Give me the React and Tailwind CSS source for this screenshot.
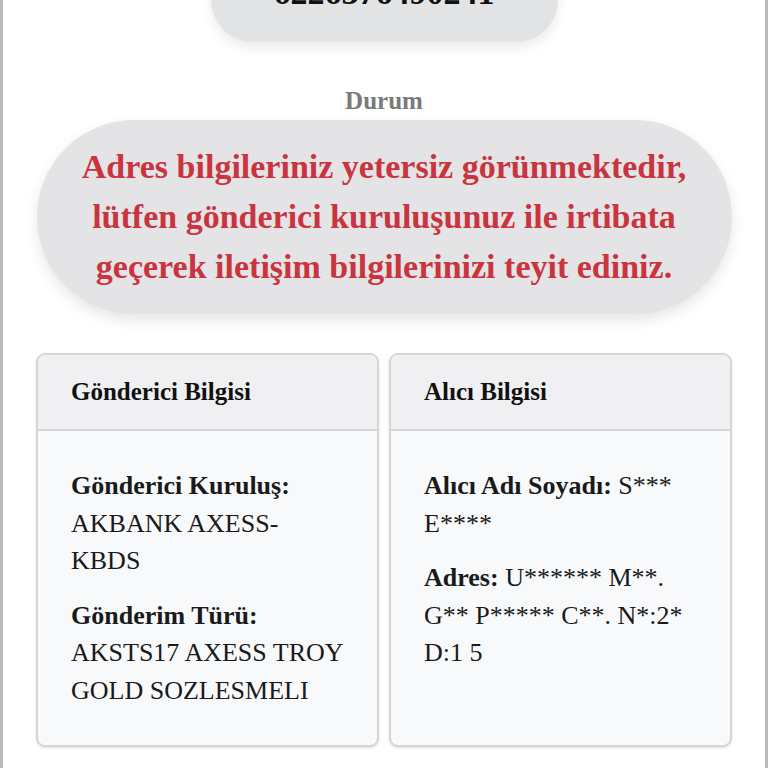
import React from 'react'

const serif = { fontFamily: '"Liberation Serif", "Times New Roman", serif' }

function InfoCard({ title, children }) {
  return (
    <div className="flex flex-col rounded-[9px] border-2 border-[#d6d6d8] bg-[#f8f9fa] shadow-sm overflow-hidden">
      <div className="h-[76px] flex items-center px-[33px] bg-[#f0f0f2] border-b-2 border-[#d6d6d8]">
        <h3 className="text-[25px] font-bold text-[#111]">{title}</h3>
      </div>
      <div className="flex-1 px-[33px] pt-[36px] pb-[36px] text-[26px] leading-[37.5px] text-[#1a1a1a] flex flex-col gap-[17px]">
        {children}
      </div>
    </div>
  )
}

export default function App() {
  return (
    <div className="min-h-[768px] h-[768px] overflow-hidden bg-white border-x-[3px] border-[#b9b9bb]" style={serif}>
      <div className="-mt-[56px] flex flex-col items-center">
        {/* takip no */}
        <div className="w-[347px] py-[30px] rounded-[42px] bg-[#e2e3e5] shadow-[0_6px_12px_rgba(0,0,0,0.08)] text-center">
          <span className="text-[34px] leading-[38px] font-bold text-[#111]">6226376490241</span>
        </div>

        <p className="mt-[44px] text-[25px] leading-[30px] font-bold text-[#7a7a7a]">Durum</p>

        <div className="mt-[4px] w-[695px] py-[22px] rounded-full bg-[#e4e4e6] shadow-[0_6px_14px_rgba(0,0,0,0.1)] text-center">
          <p className="text-[34px] leading-[50px] font-bold text-[#c9343f]">
            Adres bilgileriniz yetersiz görünmektedir,<br />
            lütfen gönderici kuruluşunuz ile irtibata<br />
            geçerek iletişim bilgilerinizi teyit ediniz.
          </p>
        </div>
      </div>

      <div className="mt-[39px] ml-[33px] mr-[33px] grid grid-cols-2 gap-[10px]">
        <InfoCard title="Gönderici Bilgisi">
          <p>
            <b>Gönderici Kuruluş:</b> AKBANK AXESS-KBDS
          </p>
          <p>
            <b>Gönderim Türü:</b> AKSTS17 AXESS TROY GOLD SOZLESMELI
          </p>
        </InfoCard>
        <InfoCard title="Alıcı Bilgisi">
          <p>
            <b>Alıcı Adı Soyadı:</b> S*** E****
          </p>
          <p>
            <b>Adres:</b> U****** M**. G** P***** C**. N*:2* D:1 5
          </p>
        </InfoCard>
      </div>
    </div>
  )
}
